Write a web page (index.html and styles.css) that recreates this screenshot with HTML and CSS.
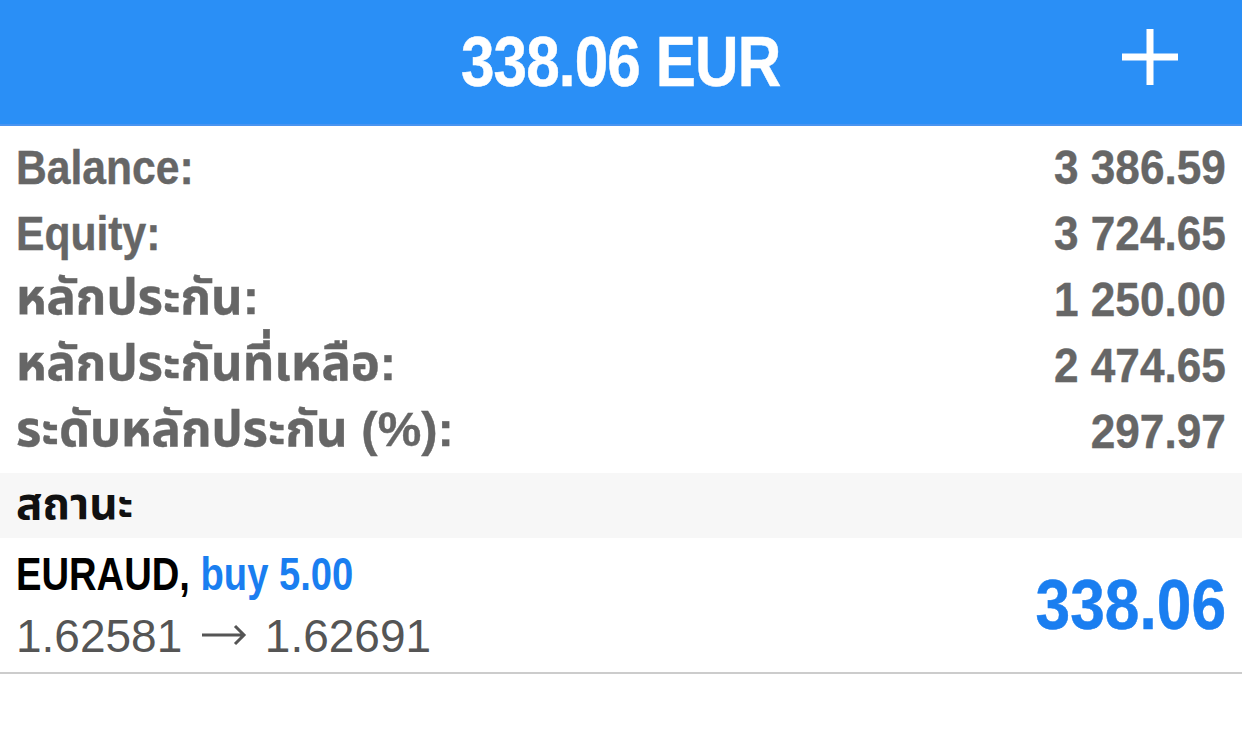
FILE: index.html
```html
<!DOCTYPE html>
<html lang="th">

<head>
    <meta charset="UTF-8">
    <title>Trade</title>
    <link rel="stylesheet" href="styles.css">
</head>

<body>
    <div class="topbar">
        <div class="title narrow">338.06 EUR</div>
        <a href="javascript:;" class="add">
            <svg width="58" height="58" viewBox="0 0 58 58">
                <path d="M29 1 V57 M1 29 H57" stroke="#ffffff" stroke-width="7" fill="none" />
            </svg>
        </a>
    </div>

    <div class="summary">
        <div class="row"><span class="label narrow">Balance:</span><span class="value">3 386.59</span></div>
        <div class="row"><span class="label narrow">Equity:</span><span class="value">3 724.65</span></div>
        <div class="row"><span class="label">หลักประกัน:</span><span class="value">1 250.00</span></div>
        <div class="row"><span class="label">หลักประกันที่เหลือ:</span><span class="value">2 474.65</span></div>
        <div class="row"><span class="label">ระดับหลักประกัน (%):</span><span class="value">297.97</span></div>
    </div>

    <div class="section">สถานะ</div>

    <div class="position">
        <div class="info">
            <div class="symbol"><span class="narrow">EURAUD, <span class="type">buy 5.00</span></span></div>
            <div class="prices">1.62581 <svg class="arrow" width="46" height="22" viewBox="0 0 46 22">
                    <path d="M1 11 H43 M34 2 L43 11 L34 20" stroke="#555555" stroke-width="3" fill="none" />
                </svg> 1.62691</div>
        </div>
        <div class="profit">338.06</div>
    </div>
</body>

</html>
```

FILE: styles.css
```css
* {
    margin: 0;
    padding: 0;
}

body {
    background: #ffffff;
    font-family: "Liberation Sans", "Noto Sans Thai", sans-serif;
    width: 1242px;
}

.narrow {
    display: inline-block;
    transform-origin: left center;
}

.topbar {
    height: 124px;
    background: #2a8ff6;
    border-bottom: 2px solid #4a94f0;
    display: flex;
    align-items: center;
    justify-content: center;
    position: relative;
}

.title {
    color: #ffffff;
    font-weight: bold;
    font-size: 70px;
    letter-spacing: -1px;
    transform: scaleX(0.86);
    transform-origin: center;
    -webkit-text-stroke: 0.5px #ffffff;
}

.add {
    position: absolute;
    right: 63px;
    top: 28px;
    display: block;
    line-height: 0;
}

.summary {
    padding: 8px 16px 9px 16px;
}

.row {
    height: 66px;
    display: flex;
    align-items: center;
    justify-content: space-between;
    color: #666666;
    font-weight: bold;
    font-size: 48px;
    -webkit-text-stroke: 0.4px #666666;
}

.label.narrow {
    transform: scaleX(0.87);
}

.row .label {
    font-size: 49px;
}

.value {
    display: inline-block;
    transform: scaleX(0.92);
    transform-origin: right center;
}

.section {
    height: 65px;
    background: #f7f7f7;
    display: flex;
    align-items: center;
    padding: 0 16px;
    font-weight: bold;
    font-size: 44px;
    color: #111111;
}

.position {
    height: 134px;
    border-bottom: 2px solid #cccccc;
    display: flex;
    align-items: center;
    justify-content: space-between;
    padding: 0 16px;
}

.symbol {
    font-weight: bold;
    font-size: 46px;
    color: #000000;
    line-height: 62px;
}

.symbol .narrow {
    transform: scaleX(0.83);
}

.type {
    color: #1a7ef0;
}

.prices {
    font-size: 46px;
    color: #555555;
    line-height: 62px;
}

.arrow {
    vertical-align: 6px;
    margin: 0 5px 0 6px;
}

.profit {
    font-weight: bold;
    font-size: 70px;
    color: #1a7ef0;
    transform: scaleX(0.89);
    transform-origin: right center;
    -webkit-text-stroke: 0.5px #1a7ef0;
}
```
